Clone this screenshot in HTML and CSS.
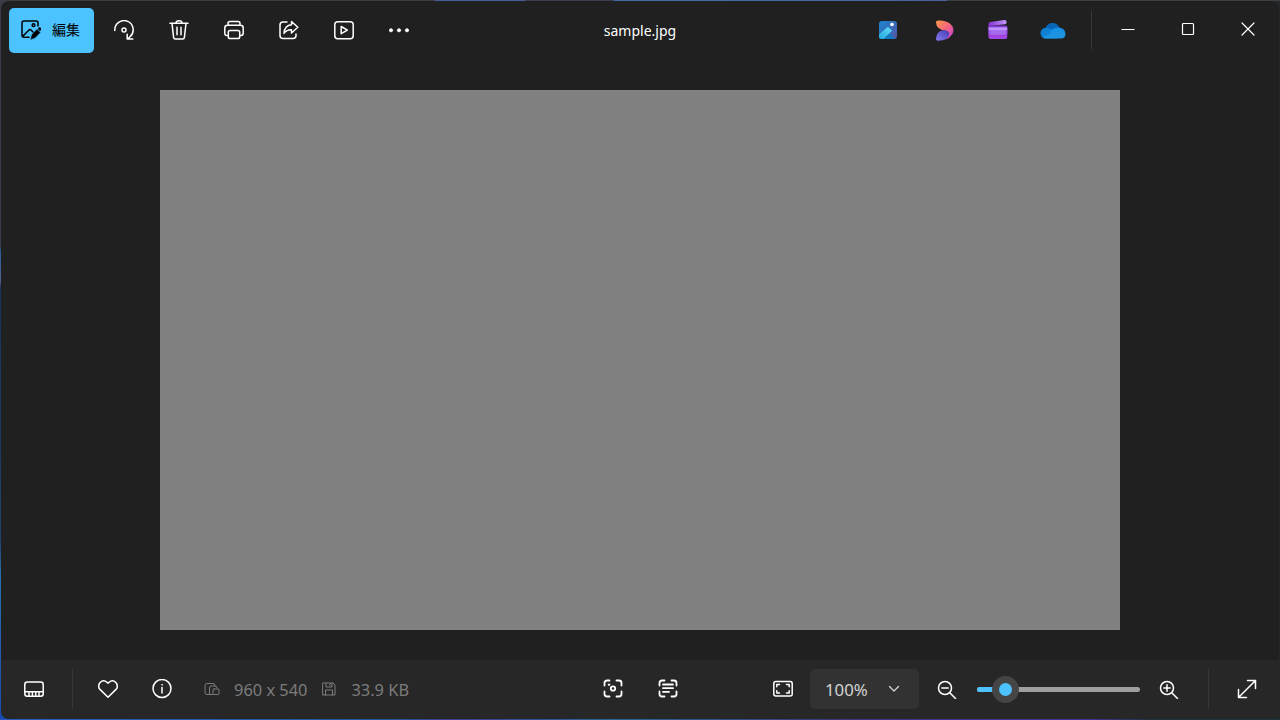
FILE: index.html
```html
<!DOCTYPE html>
<html lang="ja">
<head>
  <meta charset="UTF-8">
  <meta name="viewport" content="width=device-width, initial-scale=1.0">
  <title>sample.jpg</title>
  <link rel="stylesheet" href="styles.css">
</head>
<body>
  <div class="window">
    <header class="title-bar">
      <div class="toolbar">
        <button class="edit-btn">
          <svg class="icon" viewBox="0 0 20 20">
            <path d="M8 17.2H3a2 2 0 0 1-2-2V3a2 2 0 0 1 2-2h12a2 2 0 0 1 2 2v3M2 16l6-6q1-.8 2 0l2 2"/>
            <circle cx="12.5" cy="5.2" r="1.4"/>
            <path class="solid" d="M10 19l1.2-4.6 4.8-4.8 3 3-4.7 4.8z"/>
            <path class="solid" d="M17 8.6l1-.8q1-.5 1.8.3.7.8.1 1.7l-.9 1z"/>
          </svg>
          <span>編集</span>
        </button>
        <button class="tool">
          <svg class="icon" viewBox="0 0 20 20"><path d="M.8 10.5A9.2 9.2 0 1 1 15.8 17l-2.4 2M13.2 14.2v4.9h5.6"/><circle cx="10" cy="10" r="2"/></svg>
        </button>
        <button class="tool">
          <svg class="icon" viewBox="0 0 20 20"><path d="M1 3.2h18M3 3.4l1.6 14q.2 1.6 1.8 1.6h7.2q1.6 0 1.8-1.6L17 3.4M7 3Q7 .8 10 .8T13 3M8 7.3v7.5M12 7.3v7.5"/></svg>
        </button>
        <button class="tool">
          <svg class="icon" viewBox="0 0 20 20"><path d="M4 5V3.5q0-2 2-2h8q2 0 2 2V5M4.3 15.5H3q-2.2 0-2.2-2.2V8q0-2.700 2.700-2.700h13q2.700 0 2.700 2.700v5.300q0 2.200-2.200 2.200h-1.300"/><rect x="4.3" y="10.5" width="11.4" height="8" rx="1.8"/></svg>
        </button>
        <button class="tool">
          <svg class="icon" viewBox="0 0 20 20"><path d="M8 2H4Q1 2 1 5v10.5q0 3 3 3h10q3 0 3-3V14"/><path d="M12.5 1.5l6.3 5.8-6.3 5.7V9.8Q8 9.5 5 13.4q.5-8 7.5-8.700z"/></svg>
        </button>
        <button class="tool">
          <svg class="icon" viewBox="0 0 20 20"><rect x=".8" y="1.7" width="18.4" height="17" rx="3"/><path d="M7.2 6.5v7.2l6.2-3.6z"/></svg>
        </button>
        <button class="tool">
          <svg class="icon" viewBox="0 0 20 20"><g class="solid"><circle cx="2" cy="10.3" r="1.7"/><circle cx="10" cy="10.3" r="1.7"/><circle cx="18" cy="10.3" r="1.7"/></g></svg>
        </button>
      </div>

      <h1 class="file-name">sample.jpg</h1>

      <div class="title-right">
        <div class="apps">
          <svg class="app" viewBox="0 0 28 22">
            <defs>
              <linearGradient id="ph1" x1="0" y1="0" x2="1" y2="1"><stop offset="0" stop-color="#1985d0"/><stop offset="1" stop-color="#5656a5"/></linearGradient>
              <linearGradient id="ph2" x1="1" y1="0" x2="0" y2="1"><stop offset="0" stop-color="#65dcfb"/><stop offset="1" stop-color="#22a6dc"/></linearGradient>
            </defs>
            <rect x="5" y="2" width="18" height="18" rx="3" fill="url(#ph1)"/>
            <path d="M13.8 12.6l7.6 7.4H9z" fill="#1777c0"/>
            <path d="M5 15.500l7.300-6.600q1.500-1.200 3 0l2.800 2.900L9.500 20H7.600Q5 20 5 17.400z" fill="url(#ph2)"/>
            <circle cx="18" cy="5.5" r="1.8" fill="#fff"/>
          </svg>
          <svg class="app" viewBox="0 0 28 22">
            <defs>
              <linearGradient id="ds1" x1="0" y1="0" x2="1" y2="1"><stop offset="0" stop-color="#ff9a49"/><stop offset=".5" stop-color="#f5647d"/><stop offset="1" stop-color="#b63be4"/></linearGradient>
              <linearGradient id="ds2" x1="1" y1="0" x2="0" y2="1"><stop offset="0" stop-color="#403aae"/><stop offset="1" stop-color="#8a7cf4"/></linearGradient>
            </defs>
            <path d="M7 3.200q0-1.700 2-1.700 8-.5 12.500 3.500 4.800 5 1.800 10.300-2.500 4-6.800 5.200l1.300-8.600Q7.200 11 7 3.200z" fill="url(#ds1)"/>
            <path d="M7 20Q7.500 11.400 15 11.200q4 0 5.300 3-.3 7.500-11.300 7.600-2 0-2-1.800z" fill="url(#ds2)"/>
          </svg>
          <svg class="app" viewBox="0 0 28 22">
            <defs>
              <linearGradient id="cc1"><stop offset="0" stop-color="#8333cf"/><stop offset="1" stop-color="#c297ff"/></linearGradient>
              <linearGradient id="cc2" x2="0" y2="1"><stop offset="0" stop-color="#7f38d0"/><stop offset="1" stop-color="#a848e9"/></linearGradient>
            </defs>
            <path d="M4.5 7V5q0-1.700 1.700-2L20.500 1q2-.2 2 1.500v1.300q0 1.200-1.400 1.500z" fill="url(#cc1)"/>
            <path d="M4.500 6.600h17q1.800 0 1.800 1.800v9.400q0 2.200-2.200 2.200H6.700q-2.200 0-2.200-2.200z" fill="url(#cc2)"/>
            <path d="M4.500 8.200h18.800v3.300H4.500z" fill="#b88aff"/>
            <path d="M4.500 11.500h18.800v3.700H4.500z" fill="#9855e8"/>
            <path d="M6.300 9h15.400v7H6.300z" fill="#d2b0ff" opacity=".25"/>
          </svg>
          <svg class="app" viewBox="0 0 28 22">
            <path d="M6.600 9Q8.500 4 13.400 4q5 0 7.200 5l-8 6z" fill="#0866b8"/>
            <path d="M6.500 19.400Q1.800 19 1.500 14.300q.2-5 5.300-5.500 2.500-.3 5 1.400l8.600 6.200-3.100 3z" fill="#1080d4"/>
            <path d="M10 13.700q4-5.500 9.200-5.200 6.500.5 7.300 6l-3 2z" fill="#1592e6"/>
            <path d="M3.500 18L13 14q4.500-1.700 8-1.400 5.300.3 5.500 3-.5 3.900-4.500 3.900H7q-2.500 0-3.500-1.500z" fill="#1c94e0"/>
          </svg>
        </div>
        <div class="captions">
          <button><svg viewBox="0 0 14 14"><path d="M1 7.500h12"/></svg></button>
          <button><svg viewBox="0 0 14 14"><rect x="1.500" y="1.500" width="11" height="11" rx="1"/></svg></button>
          <button><svg viewBox="0 0 14 14"><path d="M1 1l12 12M13 1L1 13"/></svg></button>
        </div>
      </div>
    </header>

    <main class="viewer">
      <div class="photo"></div>
    </main>

    <footer class="status-bar">
      <div class="status-left">
        <button class="filmstrip">
          <svg class="icon" viewBox="0 0 20 20"><rect x=".8" y="3" width="18.400" height="14.300" rx="2.500"/><path d="M1 12.700h18M5 13v4M8.400 13v4M11.700 13v4M15 13v4"/></svg>
        </button>
        <button class="tool heart">
          <svg class="icon" viewBox="0 0 20 20"><path d="M10 18.300L2 10.400Q-.5 7.500 1.700 4q3.500-4.200 7.200-.800l1.100 1.100 1.100-1.100q3.700-3.400 7.200.800 2.200 3.500-.3 6.400z"/></svg>
        </button>
        <button class="tool details">
          <svg class="icon" viewBox="0 0 20 20"><circle cx="10" cy="9.500" r="9"/><path d="M10 8.500v5.500"/><circle class="solid" cx="10" cy="5.800" r=".5"/></svg>
        </button>
        <div class="info dimensions">
          <svg viewBox="0 0 16 14"><path d="M5 12.500H3q-2 0-2-2v-7q0-2 2-2h6q2 0 2 2V4M5.500 12.500V6q0-2 2-2H11q2 0 2 2M5.500 12.500H9"/><rect x="9" y="7" width="6" height="5.500" rx="1"/></svg>
          <span>960 x 540</span>
        </div>
        <div class="info file-size">
          <svg viewBox="0 0 14 14"><path d="M1 1h10l2 2v10H1zM4 1v4h6V1M8 1.500v2M3.500 13V8h7v5"/></svg>
          <span>33.9 KB</span>
        </div>
      </div>

      <div class="status-center">
        <button class="tool">
          <svg class="icon bold" viewBox="0 0 20 20"><path d="M1.500 6.500V4q0-2.500 2.500-2.500h2.500M13.500 1.500H16q2.500 0 2.500 2.500v2.500M18.500 12.500V15q0 2.500-2.500 2.500h-2.500M6.500 17.500H4Q1.500 17.500 1.500 15v-2.500"/><circle cx="10" cy="9.500" r="2.200"/><circle class="solid" cx="6" cy="5.700" r=".9"/></svg>
        </button>
        <button class="tool">
          <svg class="icon bold" viewBox="0 0 20 20"><path d="M1.500 6.500V4q0-2.500 2.500-2.500h2.500M13.500 1.500H16q2.500 0 2.500 2.500v2.500M18.500 12.500V15q0 2.500-2.500 2.500h-2.500M6.500 17.500H4Q1.500 17.500 1.500 15v-2.500M5 5.500h10M5 9.200h10M5 12.900h6"/></svg>
        </button>
      </div>

      <div class="status-right">
        <button class="tool">
          <svg class="icon" viewBox="0 0 20 20"><rect x=".8" y="2.500" width="18.400" height="14.500" rx="2"/><path d="M3.800 7.700V5.500H6.500M13.500 5.500h2.700v2.200M16.200 11.800V14h-2.700M6.500 14H3.800v-2.200"/></svg>
        </button>
        <button class="zoom-level">
          <span>100%</span>
          <svg viewBox="0 0 12 12"><path d="M1.500 3.500L6 8l4.500-4.500"/></svg>
        </button>
        <button class="tool zoom-out">
          <svg class="icon" viewBox="0 0 20 20"><circle cx="8" cy="9" r="6.500"/><path d="M13 14l5.500 5.500M4.800 9h6.400"/></svg>
        </button>
        <div class="slider">
          <span class="slider-fill"></span>
          <span class="slider-thumb"></span>
        </div>
        <button class="tool zoom-in">
          <svg class="icon" viewBox="0 0 20 20"><circle cx="8" cy="9" r="6.500"/><path d="M13 14l5.500 5.500M4.800 9h6.400M8 5.800v6.400"/></svg>
        </button>
        <button class="fullscreen">
          <svg class="icon" viewBox="0 0 20 20"><path d="M1.500 18.500l17-17M10.500 1.500h8v8M1.500 10.500v8h8"/></svg>
        </button>
      </div>
    </footer>
  </div>
</body>
</html>
```

FILE: styles.css
```css
* {
  box-sizing: border-box;
}

body {
  margin: 0;
  height: 100vh;
  padding: 1px;
  overflow: hidden;
  font-family: "Noto Sans", "Noto Sans CJK JP", sans-serif;
  color: #fff;
  background:
    linear-gradient(90deg, #3b3e44 0 34%, #455d9b 34% 41%, #3b3d52 41% 48%, #4569a8 48% 54%, #46669f 67%, #4d5fa1 74%, #3b4040 74%) top / 100% 1px no-repeat,
    linear-gradient(90deg, #2858c0, #1e5b9b 30%, #413b92 35%, #26659b 48%, #3b3684 65%, #443199 85%, #1b3440 90%) bottom / 100% 1px no-repeat,
    linear-gradient(#393b48 0 34%, #2460a4 35%, #555f8e 39%, #173356 40%, #203f6c 75%, #2770ae 80%, #1849af) left / 10px 100% no-repeat,
    #25282b;
}

button {
  padding: 0;
  border: none;
  background: none;
  color: inherit;
  font-family: inherit;
  display: flex;
  align-items: center;
  justify-content: center;
}

svg {
  flex: none;
  fill: none;
  stroke: currentColor;
  stroke-linecap: round;
  stroke-linejoin: round;
}

.icon {
  width: 20px;
  height: 20px;
  stroke-width: 1.5;
}

.icon.bold {
  stroke-width: 1.8;
}

.solid {
  fill: currentColor;
  stroke-width: 0.5;
}

.window {
  height: 100%;
  display: flex;
  flex-direction: column;
  border-radius: 8px;
  overflow: hidden;
  background: #202020;
}

/* title bar */
.title-bar {
  height: 59px;
  flex: none;
  display: grid;
  grid-template-columns: 1fr auto 1fr;
  align-items: center;
}

.toolbar {
  display: flex;
  align-items: center;
  padding-left: 8px;
}

.edit-btn {
  width: 85px;
  height: 45px;
  margin-right: 2px;
  padding: 0 2px 1px 0;
  gap: 11px;
  border-radius: 5px;
  background: #4cc2ff;
  color: #000;
  font-size: 14px;
}

.edit-btn span {
  line-height: 20px;
}

.tool {
  width: 55px;
  height: 45px;
  padding-bottom: 1px;
}

.file-name {
  margin: 0;
  font-size: 14px;
  line-height: 20px;
  font-weight: 400;
}

.title-right {
  display: flex;
  justify-content: flex-end;
  align-items: center;
  padding-bottom: 2px;
}

.apps {
  height: 38px;
  display: flex;
  align-items: center;
  gap: 27px;
  padding: 0 24px 0 0;
  border-right: 1px solid #383838;
}

.app {
  width: 28px;
  height: 22px;
  stroke: none;
}

.captions {
  display: flex;
  padding: 0 1px 1px 6px;
}

.captions button {
  width: 60px;
  height: 45px;
}

.captions svg {
  width: 14px;
  height: 14px;
  stroke-width: 1.2;
}

/* picture area */
.viewer {
  flex: 1;
  display: flex;
  align-items: center;
  justify-content: center;
}

.photo {
  width: 960px;
  height: 540px;
  background: #808080;
}

/* bottom bar */
.status-bar {
  height: 59px;
  flex: none;
  display: grid;
  grid-template-columns: 1fr auto 1fr;
  align-items: center;
  padding-bottom: 1px;
  background: #272727;
}

.status-left,
.status-center,
.status-right {
  display: flex;
  align-items: center;
}

.status-right {
  justify-content: flex-end;
}

.filmstrip {
  width: 72px;
  height: 40px;
  padding: 0 5px 1px 0;
  border-right: 1px solid #353535;
}

.heart {
  margin-left: 7px;
}

.details {
  width: 54px;
}

.info {
  display: flex;
  align-items: center;
  color: #7c7c7c;
  font-size: 16.4px;
  line-height: 24px;
  white-space: nowrap;
}

.info svg {
  height: 14px;
}

.info span {
  padding-top: 2px;
}

.dimensions {
  margin-left: 15px;
  gap: 14px;
}

.dimensions svg {
  width: 16px;
}

.file-size {
  margin-left: 15px;
  gap: 15px;
}

.file-size svg {
  width: 14px;
}

.zoom-level {
  width: 109px;
  height: 40px;
  justify-content: space-between;
  padding: 0 19px 0 15px;
  border-radius: 5px;
  background: #323232;
  color: #d4d4d4;
  font-size: 16.8px;
}

.zoom-level span {
  padding-top: 1px;
}

.zoom-level svg {
  width: 12px;
  height: 12px;
  stroke-width: 1.3;
}

.slider {
  position: relative;
  width: 163px;
  height: 5px;
  margin: 0 1px 0 3px;
  border-radius: 3px;
  background: #9f9f9f;
}

.slider-fill {
  display: block;
  width: 28px;
  height: 5px;
  border-radius: 3px;
  background: #4cc2ff;
}

/* the thumb sits over the track */
.slider-thumb {
  position: absolute;
  left: 15px;
  top: -11px;
  width: 27px;
  height: 27px;
  border: 7px solid #454545;
  border-radius: 50%;
  background: #4cc2ff;
}

.fullscreen {
  width: 71px;
  height: 40px;
  margin-left: 12px;
  padding: 0 0 1px 5px;
  border-left: 1px solid #353535;
}
```
